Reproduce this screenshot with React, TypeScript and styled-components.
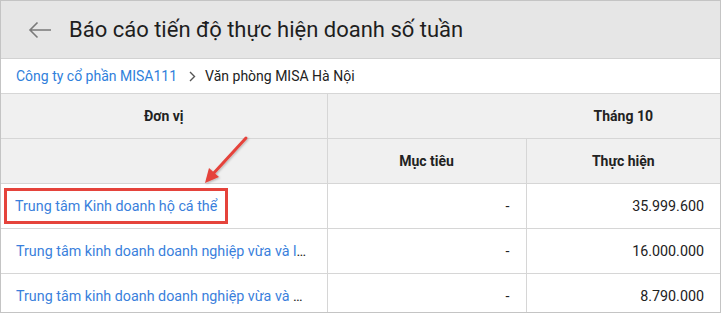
import React from 'react';
import styled, { createGlobalStyle } from 'styled-components';

const GlobalStyle = createGlobalStyle`
  html, body {
    margin: 0;
    padding: 0;
    background: #ffffff;
  }

  body {
    font-family: Roboto, 'Noto Sans', Arial, sans-serif;
    color: #212121;
  }
`;

const Frame = styled.div`
  position: relative;
  box-sizing: border-box;
  width: 721px;
  height: 313px;
  border: 1px solid #c4c4c4;
  overflow: hidden;
  background: #ffffff;
`;

const TopBar = styled.div`
  display: flex;
  align-items: center;
  height: 57px;
  padding-left: 27px;
  background: #e6e6e6;
  border-bottom: 1px solid #d2d2d2;
`;

const BackButton = styled.button`
  display: flex;
  align-items: center;
  justify-content: center;
  width: 24px;
  height: 24px;
  padding: 0;
  margin-right: 17px;
  border: none;
  background: transparent;
  cursor: pointer;
`;

const Title = styled.h1`
  margin: 0;
  font-size: 22px;
  font-weight: 400;
  color: #1e1e1e;
`;

const Breadcrumb = styled.nav`
  display: flex;
  align-items: center;
  height: 34px;
  padding-left: 15px;
  font-size: 14px;
  border-bottom: 1px solid #d6d6d6;
`;

const Crumb = styled.a<{ $current?: boolean }>`
  color: ${p => (p.$current ? '#222222' : '#2f80db')};
  text-decoration: none;
`;

const Separator = styled.span`
  display: flex;
  align-items: center;
  margin: 0 9px 0 12px;
`;

const Table = styled.table`
  width: 100%;
  border-collapse: collapse;
  table-layout: fixed;
  font-size: 14.3px;
`;

const HeadCell = styled.th<{ $split?: boolean }>`
  height: 44px;
  padding: 0;
  background: #f0f0f0;
  border-right: 1px solid #d6d6d6;
  border-bottom: 1px solid #d6d6d6;
  font-weight: 700;
  font-size: 14px;
  color: #222222;
  text-align: center;
  padding-left: ${p => (p.$split ? '199px' : '0')};

  &:last-child {
    border-right: none;
  }
`;

const Cell = styled.td<{ $align?: 'left' | 'right'; $highlight?: boolean }>`
  height: 44px;
  padding: 0 16px 0
    ${p => (p.$highlight ? '3px' : p.$align === 'right' ? '0' : '15px')};
  border-right: 1px solid #d6d6d6;
  border-bottom: 1px solid #d6d6d6;
  text-align: ${p => p.$align ?? 'left'};
  color: #222222;
  white-space: nowrap;
  overflow: hidden;
  text-overflow: ellipsis;

  &:last-child {
    border-right: none;
  }
`;

const UnitLink = styled.a`
  color: #3a7fdc;
  text-decoration: none;
`;

const Highlight = styled.span`
  display: inline-block;
  padding: 7px 8px 7px 8px;
  border: 3px solid #e5433b;
`;

const Annotation = styled.svg`
  position: absolute;
  left: 0;
  top: 0;
  pointer-events: none;
`;

const rows = [
  { name: 'Trung tâm Kinh doanh hộ cá thể', target: '-', actual: '35.999.600', highlight: true },
  { name: 'Trung tâm kinh doanh doanh nghiệp vừa và lớn', target: '-', actual: '16.000.000' },
  { name: 'Trung tâm kinh doanh doanh nghiệp vừa và nhỏ', target: '-', actual: '8.790.000' },
];

const App = () => {
  return (
    <>
      <GlobalStyle />
      <Frame>
        <TopBar>
          <BackButton aria-label="Quay lại">
            <svg width="24" height="18" viewBox="0 0 24 18">
              <path
                d="M23 9H2.5M9.5 1.5L2 9l7.5 7.5"
                fill="none"
                stroke="#7a7a7a"
                strokeWidth="1.6"
              />
            </svg>
          </BackButton>
          <Title>Báo cáo tiến độ thực hiện doanh số tuần</Title>
        </TopBar>

        <Breadcrumb>
          <Crumb href="#">Công ty cổ phần MISA111</Crumb>
          <Separator>
            <svg width="7" height="11" viewBox="0 0 7 11">
              <path d="M1 1l4.5 4.5L1 10" fill="none" stroke="#555" strokeWidth="1.4" />
            </svg>
          </Separator>
          <Crumb $current>Văn phòng MISA Hà Nội</Crumb>
        </Breadcrumb>

        <Table>
          <colgroup>
            <col style={{ width: 326 }} />
            <col style={{ width: 199 }} />
            <col />
          </colgroup>
          <thead>
            <tr>
              <HeadCell>Đơn vị</HeadCell>
              <HeadCell colSpan={2} $split>
                Tháng 10
              </HeadCell>
            </tr>
            <tr>
              <HeadCell />
              <HeadCell>Mục tiêu</HeadCell>
              <HeadCell>Thực hiện</HeadCell>
            </tr>
          </thead>
          <tbody>
            {rows.map(row => (
              <tr key={row.name}>
                <Cell $highlight={row.highlight}>
                  {row.highlight ? (
                    <Highlight>
                      <UnitLink href="#">{row.name}</UnitLink>
                    </Highlight>
                  ) : (
                    <UnitLink href="#">{row.name}</UnitLink>
                  )}
                </Cell>
                <Cell $align="right">{row.target}</Cell>
                <Cell $align="right">{row.actual}</Cell>
              </tr>
            ))}
          </tbody>
        </Table>

        <Annotation width="721" height="313">
          <defs>
            <filter id="shadow" x="-20%" y="-20%" width="140%" height="140%">
              <feDropShadow dx="1" dy="1" stdDeviation="1" floodColor="#000" floodOpacity="0.25" />
            </filter>
          </defs>
          <g filter="url(#shadow)" stroke="#e5433b" fill="#e5433b">
            <line x1="245" y1="137" x2="211" y2="174" strokeWidth="3" strokeLinecap="round" />
            <polygon points="204,182 208,167 218,176" stroke="none" />
          </g>
        </Annotation>
      </Frame>
    </>
  );
};

export default App;
